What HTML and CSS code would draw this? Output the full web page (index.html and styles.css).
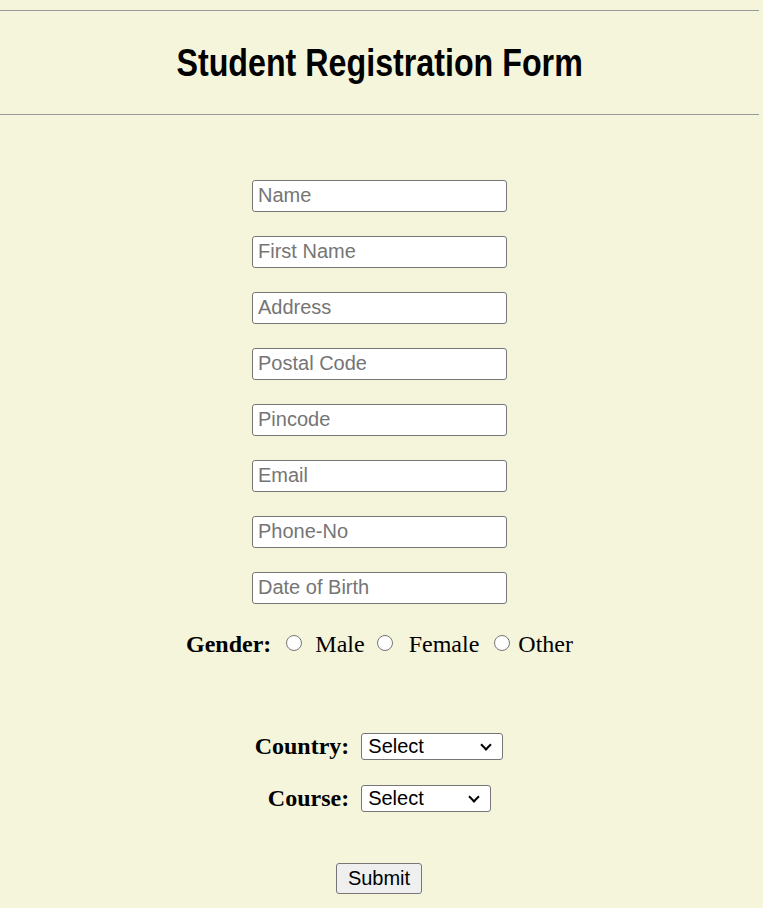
FILE: index.html
```html
<!DOCTYPE html>
<html>
<head>
<meta charset="utf-8">
<title>Student Registration Form</title>
<link rel="stylesheet" href="styles.css">
</head>
<body>
<div class="page">
  <header class="header">
    <h1 class="title">Student Registration Form</h1>
  </header>
  <form class="form">
    <input class="field" type="text" placeholder="Name">
    <input class="field" type="text" placeholder="First Name">
    <input class="field" type="text" placeholder="Address">
    <input class="field" type="text" placeholder="Postal Code">
    <input class="field" type="text" placeholder="Pincode">
    <input class="field" type="email" placeholder="Email">
    <input class="field" type="text" placeholder="Phone-No">
    <input class="field" type="text" placeholder="Date of Birth">
    <div class="gender"><b class="label">Gender:</b><input class="radio r1" type="radio" name="g"><span>Male</span><input class="radio r2" type="radio" name="g"><span>Female</span><input class="radio r3" type="radio" name="g"><span>Other</span></div>
    <div class="pick country"><b class="label">Country:</b><span class="selwrap"><select class="sel sel-country"><option>Select</option></select></span></div>
    <div class="pick course"><b class="label">Course:</b><span class="selwrap"><select class="sel sel-course"><option>Select</option></select></span></div>
    <button class="submit" type="button">Submit</button>
  </form>
</div>
</body>
</html>
```
FILE: styles.css
```css
html, body {
  margin: 0;
  padding: 0;
  background: #f5f5dc;
}
.page {
  width: 759px;
  padding-top: 10px;
}
.header {
  border-top: 1px solid #9a9a9a;
  border-bottom: 1px solid #9a9a9a;
  height: 103px;
  display: flex;
  align-items: center;
  justify-content: center;
}
.title {
  margin: 0 0 0 0;
  display: inline-block;
  font-family: "Liberation Sans", Arial, sans-serif;
  font-weight: bold;
  font-size: 38px;
  line-height: 44px;
  color: #000;
  transform: scaleX(0.848);
}
.form {
  display: flex;
  flex-direction: column;
  align-items: center;
  padding-top: 65px;
}
.field {
  box-sizing: border-box;
  width: 255px;
  height: 32px;
  margin: 0 0 24px 0;
  padding: 0 4px 2px 5px;
  border: 1px solid #767676;
  border-radius: 3px;
  background: #fff;
  font-family: "Liberation Sans", Arial, sans-serif;
  font-size: 20px;
  color: #000;
}
.field::placeholder {
  color: #757575;
}
.gender {
  height: 32px;
  line-height: 32px;
  font-family: "Liberation Serif", "Times New Roman", serif;
  font-size: 24px;
  color: #000;
  white-space: nowrap;
}
.label {
  font-family: "Liberation Serif", "Times New Roman", serif;
  font-weight: bold;
  font-size: 24px;
}
.radio {
  -webkit-appearance: none;
  appearance: none;
  box-sizing: border-box;
  display: inline-block;
  width: 16px;
  height: 16px;
  margin: 0 13px 1px 15px;
  padding: 0;
  border: 1.5px solid #767676;
  border-radius: 50%;
  background: #fff;
  vertical-align: baseline;
}
.r2 { margin-left: 12px; margin-right: 16px; }
.r3 { margin-left: 15px; margin-right: 8px; }
.pick {
  display: flex;
  align-items: center;
  justify-content: center;
  gap: 12px;
  height: 27px;
}
.country { margin-top: 73px; margin-right: 1px; }
.course { margin-top: 25px; }
.selwrap {
  position: relative;
  display: block;
  height: 27px;
}
.selwrap::after {
  content: "";
  position: absolute;
  right: 13px;
  top: 8px;
  width: 6px;
  height: 6px;
  border-right: 2px solid #000;
  border-bottom: 2px solid #000;
  transform: rotate(45deg);
  pointer-events: none;
}
.sel {
  -webkit-appearance: none;
  appearance: none;
  box-sizing: border-box;
  display: block;
  height: 27px;
  margin: 0;
  border: 1px solid #767676;
  border-radius: 3px;
  background: #fff;
  font-family: "Liberation Sans", Arial, sans-serif;
  font-size: 20px;
  color: #000;
  padding: 0 2px 1px 6px;
}
.sel-country { width: 142px; }
.sel-course { width: 130px; }
.submit {
  margin-top: 51px;
  margin-right: 1px;
  box-sizing: border-box;
  width: 86px;
  height: 31px;
  padding: 0 0 1px 0;
  border: 1px solid #767676;
  border-radius: 3px;
  background: #efefef;
  font-family: "Liberation Sans", Arial, sans-serif;
  font-size: 20px;
  color: #000;
}
```
